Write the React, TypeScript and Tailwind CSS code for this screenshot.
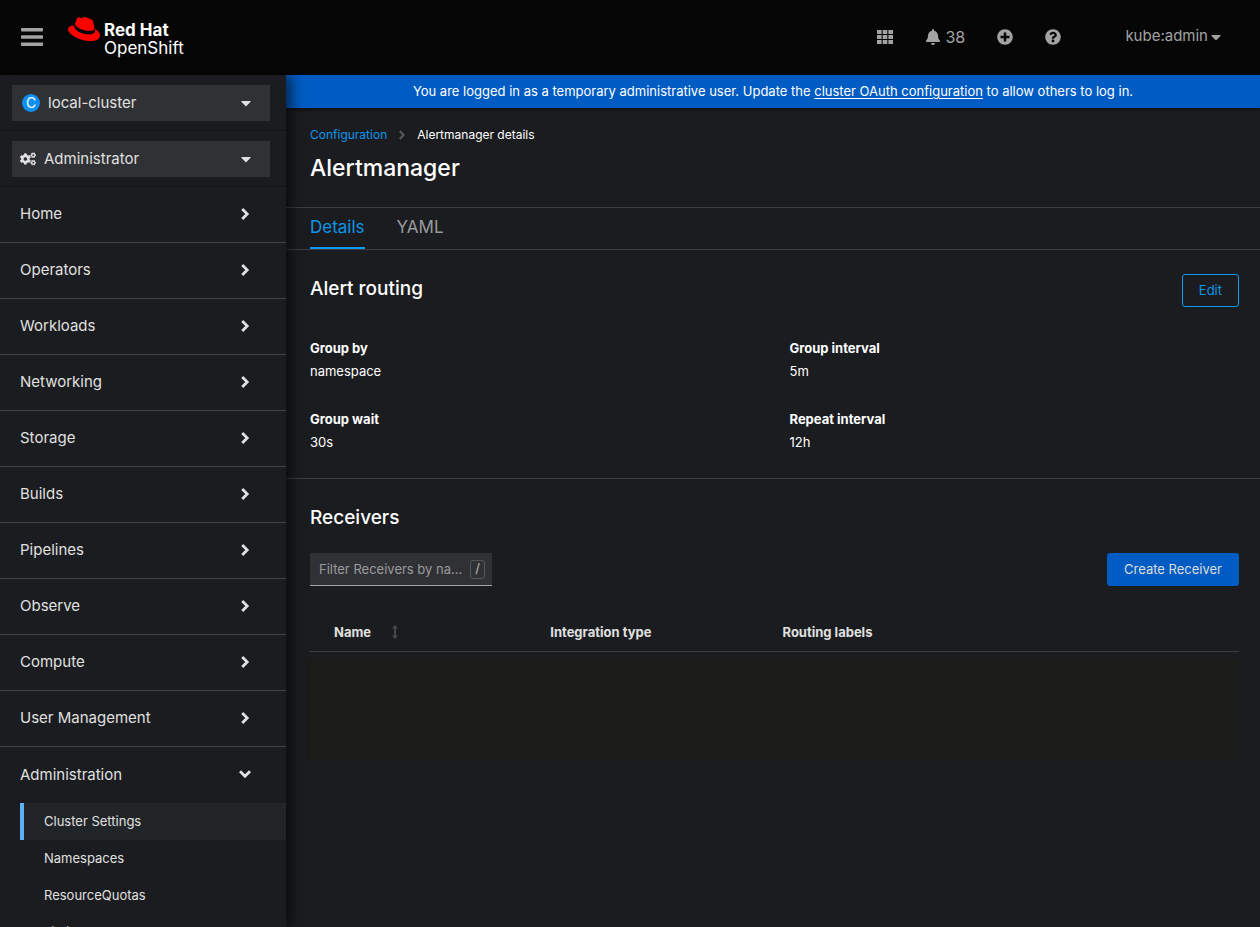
import { useState } from 'react';
import {
  FaAngleRight,
  FaBell,
  FaCaretDown,
  FaCogs,
  FaPlusCircle,
  FaQuestionCircle,
  FaRedhat,
} from 'react-icons/fa';

const sections = [
  'Home',
  'Operators',
  'Workloads',
  'Networking',
  'Storage',
  'Builds',
  'Pipelines',
  'Observe',
  'Compute',
  'User Management',
];

const adminPages = ['Cluster Settings', 'Namespaces', 'ResourceQuotas', 'LimitRanges'];

const routing = [
  { term: 'Group by', value: 'namespace' },
  { term: 'Group interval', value: '5m' },
  { term: 'Group wait', value: '30s' },
  { term: 'Repeat interval', value: '12h' },
];

function Chevron({ open = false }: { open?: boolean }) {
  return (
    <svg
      viewBox="0 0 14 14"
      className={open ? 'mb-0.5 size-3.5 rotate-90' : 'mb-0.5 size-3.5'}
      fill="none"
      stroke="currentColor"
      strokeWidth="2.8"
      aria-hidden="true"
    >
      <path d="M4.2 2 L9.2 7 L4.2 12" />
    </svg>
  );
}

function GridIcon() {
  return (
    <svg viewBox="0 0 16 14" className="h-3.5 w-4" fill="currentColor" aria-hidden="true">
      <path d="M0 0h4.6v4H0zM5.7 0h4.6v4H5.7zM11.4 0H16v4h-4.6zM0 5h4.6v4H0zM5.7 5h4.6v4H5.7zM11.4 5H16v4h-4.6zM0 10h4.6v4H0zM5.7 10h4.6v4H5.7zM11.4 10H16v4h-4.6z" />
    </svg>
  );
}

function SortIcon() {
  return (
    <svg viewBox="0 0 8 14" className="h-3.5 w-2" fill="currentColor" aria-hidden="true">
      <path d="M4 0 L7 3.5 H4.9 V10.5 H7 L4 14 L1 10.5 H3.1 V3.5 H1 Z" />
    </svg>
  );
}

function Masthead() {
  return (
    <header className="flex h-[75px] shrink-0 items-center bg-[#060606] pr-9 pb-0.5 pl-5 text-[#a3a3a3]">
      <button type="button" aria-label="Toggle navigation" className="flex size-6 items-center justify-center">
        <svg viewBox="0 0 22 20" className="h-5 w-[22px]" fill="currentColor" aria-hidden="true">
          <rect y="1" width="22" height="3.4" rx="0.8" />
          <rect y="8.3" width="22" height="3.4" rx="0.8" />
          <rect y="15.6" width="22" height="3.4" rx="0.8" />
        </svg>
      </button>
      <a href="#" className="ml-6 flex h-12 items-start gap-1 text-white">
        <FaRedhat className="size-8 text-[#fe0000]" aria-hidden="true" />
        <span className="flex flex-col pt-2 text-[17px] leading-[18px]">
          <strong className="font-bold">Red Hat</strong>
          <span>OpenShift</span>
        </span>
      </a>
      <div className="ml-auto flex items-center">
        <button type="button" aria-label="Applications" className="flex w-4 justify-center">
          <GridIcon />
        </button>
        <button type="button" aria-label="Notifications" className="ml-8 flex w-10 items-center gap-1">
          <FaBell className="size-4" />
          <span className="text-base">38</span>
        </button>
        <button type="button" aria-label="Add" className="ml-8">
          <FaPlusCircle className="size-4" />
        </button>
        <button type="button" aria-label="Help" className="ml-8">
          <FaQuestionCircle className="size-4" />
        </button>
        <button type="button" className="ml-16 flex items-center text-[15px]">
          kube:admin
          <FaCaretDown className="size-4" />
        </button>
      </div>
    </header>
  );
}

function Sidebar() {
  return (
    <aside className="z-10 flex w-[286px] shrink-0 flex-col overflow-hidden bg-[#1b1c1f] text-[15px] text-[#e0e0e0] shadow-[6px_0_12px_rgba(0,0,0,0.55)]">
      <div className="border-b border-[#131417] pt-[10px] pr-4 pb-[9px] pl-3">
        <div className="flex h-9 items-center bg-[#303134] pr-4 pl-2.5">
          <span className="flex size-[18px] items-center justify-center rounded-full bg-[#0d8ff0] text-sm text-white">C</span>
          <select aria-label="Cluster" className="ml-2 flex-1 appearance-none bg-transparent outline-none">
            <option>local-cluster</option>
          </select>
          <FaCaretDown className="size-4" aria-hidden="true" />
        </div>
      </div>
      <div className="border-b border-[#131417] pt-[10px] pr-4 pb-[9px] pl-3">
        <div className="flex h-9 items-center bg-[#303134] pr-4 pl-2">
          <FaCogs className="size-4" aria-hidden="true" />
          <select aria-label="Perspective" className="ml-2 flex-1 appearance-none bg-transparent outline-none">
            <option>Administrator</option>
          </select>
          <FaCaretDown className="size-4" aria-hidden="true" />
        </div>
      </div>
      <nav aria-label="Main">
        <div className="divide-y divide-[#404144]">
          {sections.map((name) => (
            <button
              key={name}
              type="button"
              aria-expanded="false"
              className="flex h-14 w-full items-center justify-between pr-[34px] pl-5"
            >
              {name}
              <Chevron />
            </button>
          ))}
          <button type="button" aria-expanded="true" className="flex h-14 w-full items-center justify-between pr-[34px] pl-5">
            Administration
            <Chevron open />
          </button>
        </div>
        <ul className="pl-5 text-[13px]">
          {adminPages.map((page, i) => (
            <li key={page}>
              <a
                href="#"
                aria-current={i === 0 ? 'page' : undefined}
                className={
                  i === 0
                    ? 'flex h-[37px] items-center border-l-4 border-[#5db2f5] bg-[#222528] pl-5'
                    : 'flex h-[37px] items-center border-l-4 border-transparent pl-5'
                }
              >
                {page}
              </a>
            </li>
          ))}
        </ul>
      </nav>
    </aside>
  );
}

export default function App() {
  const [filter, setFilter] = useState('');
  return (
    <div className="flex h-screen flex-col overflow-hidden bg-[#1b1c1f] font-['Inter',sans-serif] text-[13px] text-white">
      <Masthead />
      <div className="flex min-h-0 flex-1">
        <Sidebar />
        <main className="min-w-0 flex-1 overflow-hidden">
          <p className="flex h-[33px] items-center justify-center bg-[#005cc3] shadow-[0_1px_4px_rgba(0,0,0,0.6)]">
            <span>
              You are logged in as a temporary administrative user. Update the{' '}
              <a href="#" className="underline underline-offset-2">
                cluster OAuth configuration
              </a>{' '}
              to allow others to log in.
            </span>
          </p>
          <div className="h-[99px] px-6 pt-4">
            <nav aria-label="Breadcrumb" className="flex h-[22px] items-center text-xs">
              <a href="#" className="text-[#0d96ea]">
                Configuration
              </a>
              <FaAngleRight className="mx-2 size-3.5 text-[#55565a]" aria-hidden="true" />
              <span>Alertmanager details</span>
            </nav>
            <h1 className="mt-1.5 text-[23px] leading-8 font-medium">Alertmanager</h1>
          </div>
          <div role="tablist" className="flex h-[43px] gap-8 border-y border-[#3c3d40] px-6 text-[17px]">
            <button type="button" role="tab" aria-selected="true" className="border-b-2 border-[#0d9bf2] text-[#0d96ea]">
              Details
            </button>
            <button type="button" role="tab" aria-selected="false" className="border-b-2 border-transparent text-[#9a9b9d]">
              YAML
            </button>
          </div>
          <section className="border-b border-[#3c3d40] pt-6 pr-[21px] pb-6 pl-6">
            <div className="flex items-start justify-between">
              <h2 className="text-[19px] leading-[30px] font-medium">Alert routing</h2>
              <button type="button" className="h-[33px] rounded-[3px] border border-[#0d9bf2] px-4 text-[#0d96ea]">
                Edit
              </button>
            </div>
            <dl className="mt-[30px] grid grid-cols-2 gap-x-[30px] gap-y-[25px]">
              {routing.map(({ term, value }) => (
                <div key={term} className="leading-[23px]">
                  <dt className="font-bold">{term}</dt>
                  <dd>{value}</dd>
                </div>
              ))}
            </dl>
          </section>
          <section className="pt-6 pr-[21px] pl-6">
            <h2 className="text-[19px] leading-[30px] font-medium">Receivers</h2>
            <div className="mt-5 flex justify-between">
              <div className="flex h-[33px] w-[182px] items-center border-b border-[#a3a3a3] bg-[#303134] pr-[7px] pl-[9px]">
                <input
                  type="text"
                  aria-label="Filter receivers by name"
                  placeholder="Filter Receivers by na..."
                  value={filter}
                  onChange={(e) => setFilter(e.target.value)}
                  className="min-w-0 flex-1 bg-transparent pt-px outline-none placeholder:text-[#9a9b9d]"
                />
                <kbd className="flex h-[19px] w-[15px] items-center justify-center rounded-[3px] border border-[#55565a] font-['Inter',sans-serif] text-[#bdbdbd]">
                  /
                </kbd>
              </div>
              <button type="button" className="h-[33px] rounded-[3px] bg-[#005cc3] px-[17px] text-[#dcdcdc]">
                Create Receiver
              </button>
            </div>
            <table className="mt-[26px] w-full table-fixed border-b border-[#3c3d40] text-left text-[#e0e0e0]">
              <thead>
                <tr className="h-[39px]">
                  <th className="w-1/4 pt-0.5 pl-6 font-bold">
                    <button type="button" className="flex items-center gap-5">
                      Name
                      <span className="text-[#4b4c50]">
                        <SortIcon />
                      </span>
                    </button>
                  </th>
                  <th className="w-1/4 pt-0.5 pl-2 font-bold">Integration type</th>
                  <th className="w-1/2 pt-0.5 pl-2 font-bold">Routing labels</th>
                </tr>
              </thead>
            </table>
            <div className="mt-[7px] -ml-1 h-[102px] bg-[#1b1b1a]" />
          </section>
        </main>
      </div>
    </div>
  );
}
